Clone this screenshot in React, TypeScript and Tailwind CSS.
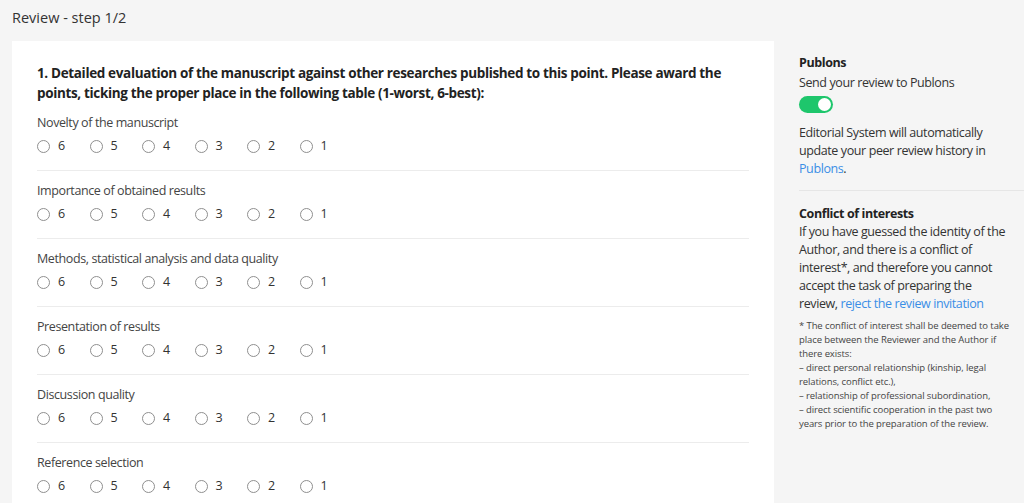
import React from "react";

const criteria = [
  "Novelty of the manuscript",
  "Importance of obtained results",
  "Methods, statistical analysis and data quality",
  "Presentation of results",
  "Discussion quality",
  "Reference selection",
];

const scores = [6, 5, 4, 3, 2, 1];

const RadioRow = ({ name }: { name: string }) => (
  <div className="flex h-[18px] items-center">
    {scores.map((s) => (
      <label key={s} className="flex w-[52.5px] items-center gap-[8px] text-[12.5px] leading-[18px] text-[#333]">
        <span className="block h-[13px] w-[13px] shrink-0 rounded-full border border-[#8f8f8f] bg-white" />
        <span>{s}</span>
        <input type="radio" name={name} className="hidden" />
      </label>
    ))}
  </div>
);

const App = () => {
  return (
    <div
      className="min-h-screen bg-[#f5f5f5] text-[#333]"
      style={{ fontFamily: '"Open Sans", "Liberation Sans", sans-serif' }}
    >
      <header className="flex h-[41px] items-center px-3 pb-[6px] text-[14.5px] text-[#333]">
        Review - step 1/2
      </header>

      <div className="flex">
        <main className="ml-3 w-[762px] shrink-0 bg-white px-[25px] pt-[22px]">
          <h2 className="text-[13.5px] font-bold leading-[20px] tracking-[-0.35px] text-[#222]">
            1. Detailed evaluation of the manuscript against other researches published to this point. Please award the
            points, ticking the proper place in the following table (1-worst, 6-best):
          </h2>
          <div>
            {criteria.map((c, i) => (
              <div
                key={c}
                className={`pt-[11px] pb-[15px] ${i < criteria.length - 1 ? "border-b border-[#ececec]" : ""}`}
              >
                <div className="mb-[5px] text-[12.5px] leading-[18px] tracking-[-0.4px] text-[#444]">{c}</div>
                <RadioRow name={`q${i}`} />
              </div>
            ))}
          </div>
        </main>

        <aside className="flex-1 pl-[25px] pt-[13px] text-[12.5px] leading-[18px] tracking-[-0.4px] text-[#333]">
          <div className="border-b border-[#e6e6e6] pb-[12px] pr-3">
            <div className="font-bold text-[#222]">Publons</div>
            <div className="mt-[2px]">Send your review to Publons</div>
            <div className="mt-[4px] flex h-[17px] w-[34px] items-center justify-end rounded-full bg-[#1ec66c] pr-[2px]">
              <span className="block h-[13px] w-[13px] rounded-full bg-white" />
            </div>
            <p className="mt-[11px]">
              Editorial System will automatically update your peer review history in{" "}
              <a className="text-[#3a8ee6]">Publons</a>.
            </p>
          </div>

          <div className="pr-3 pt-[14px]">
            <div className="font-bold text-[#222]">Conflict of interests</div>
            <p>
              If you have guessed the identity of the Author, and there is a conflict of interest*, and therefore you
              cannot accept the task of preparing the review,{" "}
              <a className="text-[#3a8ee6]">reject the review invitation</a>
            </p>
            <div className="mt-[6px] text-[9.5px] leading-[14px] tracking-[-0.1px] text-[#444]">
              <p>* The conflict of interest shall be deemed to take place between the Reviewer and the Author if there exists:</p>
              <p>– direct personal relationship (kinship, legal relations, conflict etc.),</p>
              <p>– relationship of professional subordination,</p>
              <p>– direct scientific cooperation in the past two years prior to the preparation of the review.</p>
            </div>
          </div>
        </aside>
      </div>
    </div>
  );
};

export default App;
